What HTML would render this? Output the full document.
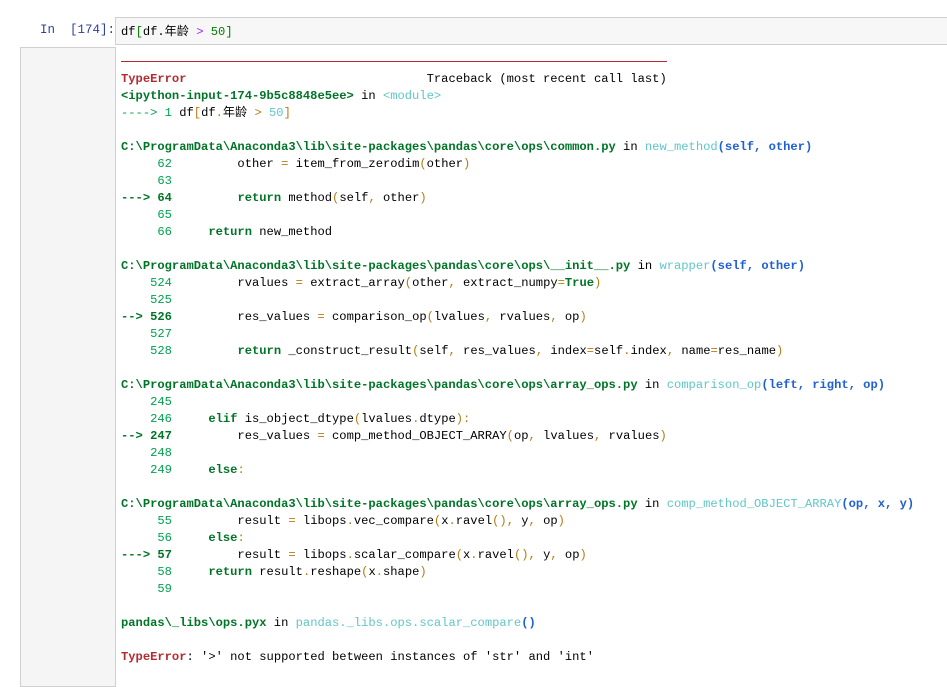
<!DOCTYPE html>
<html><head><meta charset="utf-8"><style>
body{margin:0;background:#fff;width:947px;height:669px;overflow:hidden;position:relative;font-family:"Liberation Mono","Noto Sans CJK SC",monospace;}
.p{position:absolute;left:40px;top:23px;font-size:12.5px;color:#303f9f;}
.inp{position:absolute;left:115px;top:17px;width:840px;height:28px;background:#f7f7f7;border:1px solid #cfcfcf;box-sizing:border-box;font-size:12.13px;line-height:28px;padding-left:5px;color:#000;}
.gut{position:absolute;left:20px;top:47px;width:95px;height:640px;background:#f5f5f5;border:1px solid #d0d0d0;box-sizing:border-box;border-right:none;}
.out{position:absolute;left:115px;top:47px;width:840px;height:640px;background:#fff;border-left:1px solid #d0d0d0;}
pre{position:absolute;left:121px;top:54px;margin:0;font-family:inherit;font-size:12.13px;line-height:17px;color:#000;white-space:pre;}
.r{color:#b22b31;font-weight:bold}.g{color:#00a250}.G{color:#007427;font-weight:bold}.c{color:#60c6c8}.b{color:#2060d0;font-weight:bold}.y{color:#b27d12}.k{color:#007427;font-weight:bold}
.hr{position:absolute;left:121px;top:61px;width:546px;height:1px;background:#b22b31;}
</style></head><body>
<div class="p">In&nbsp; [174]:</div>
<div class="inp">df<span style="color:#008000">[</span>df.年龄 <span style="color:#aa22ff">&gt;</span> <span style="color:#008000">50]</span></div>
<div class="gut"></div><div class="out"></div>
<div class="hr"></div>
<pre>

<span class="r">TypeError</span>                                 Traceback (most recent call last)
<span class="G">&lt;ipython-input-174-9b5c8848e5ee&gt;</span> in <span class="c">&lt;module&gt;</span>
<span class="g">----&gt; 1</span> df<span class="y">[</span>df<span class="y">.</span>年龄 <span class="y">&gt;</span> <span class="c">50</span><span class="y">]</span>

<span class="G">C:\ProgramData\Anaconda3\lib\site-packages\pandas\core\ops\common.py</span> in <span class="c">new_method</span><span class="b">(self, other)</span>
<span class="g">     62</span>         other <span class="y">=</span> item_from_zerodim<span class="y">(</span>other<span class="y">)</span>
<span class="g">     63</span>
<span class="G">---&gt; 64</span>         <span class="k">return</span> method<span class="y">(</span>self<span class="y">,</span> other<span class="y">)</span>
<span class="g">     65</span>
<span class="g">     66</span>     <span class="k">return</span> new_method

<span class="G">C:\ProgramData\Anaconda3\lib\site-packages\pandas\core\ops\__init__.py</span> in <span class="c">wrapper</span><span class="b">(self, other)</span>
<span class="g">    524</span>         rvalues <span class="y">=</span> extract_array<span class="y">(</span>other<span class="y">,</span> extract_numpy<span class="y">=</span><span class="k">True</span><span class="y">)</span>
<span class="g">    525</span>
<span class="G">--&gt; 526</span>         res_values <span class="y">=</span> comparison_op<span class="y">(</span>lvalues<span class="y">,</span> rvalues<span class="y">,</span> op<span class="y">)</span>
<span class="g">    527</span>
<span class="g">    528</span>         <span class="k">return</span> _construct_result<span class="y">(</span>self<span class="y">,</span> res_values<span class="y">,</span> index<span class="y">=</span>self<span class="y">.</span>index<span class="y">,</span> name<span class="y">=</span>res_name<span class="y">)</span>

<span class="G">C:\ProgramData\Anaconda3\lib\site-packages\pandas\core\ops\array_ops.py</span> in <span class="c">comparison_op</span><span class="b">(left, right, op)</span>
<span class="g">    245</span>
<span class="g">    246</span>     <span class="k">elif</span> is_object_dtype<span class="y">(</span>lvalues<span class="y">.</span>dtype<span class="y">):</span>
<span class="G">--&gt; 247</span>         res_values <span class="y">=</span> comp_method_OBJECT_ARRAY<span class="y">(</span>op<span class="y">,</span> lvalues<span class="y">,</span> rvalues<span class="y">)</span>
<span class="g">    248</span>
<span class="g">    249</span>     <span class="k">else</span><span class="y">:</span>

<span class="G">C:\ProgramData\Anaconda3\lib\site-packages\pandas\core\ops\array_ops.py</span> in <span class="c">comp_method_OBJECT_ARRAY</span><span class="b">(op, x, y)</span>
<span class="g">     55</span>         result <span class="y">=</span> libops<span class="y">.</span>vec_compare<span class="y">(</span>x<span class="y">.</span>ravel<span class="y">(),</span> y<span class="y">,</span> op<span class="y">)</span>
<span class="g">     56</span>     <span class="k">else</span><span class="y">:</span>
<span class="G">---&gt; 57</span>         result <span class="y">=</span> libops<span class="y">.</span>scalar_compare<span class="y">(</span>x<span class="y">.</span>ravel<span class="y">(),</span> y<span class="y">,</span> op<span class="y">)</span>
<span class="g">     58</span>     <span class="k">return</span> result<span class="y">.</span>reshape<span class="y">(</span>x<span class="y">.</span>shape<span class="y">)</span>
<span class="g">     59</span>

<span class="G">pandas\_libs\ops.pyx</span> in <span class="c">pandas._libs.ops.scalar_compare</span><span class="b">()</span>

<span class="r">TypeError</span>: '&gt;' not supported between instances of 'str' and 'int'
</pre>
</body></html>
